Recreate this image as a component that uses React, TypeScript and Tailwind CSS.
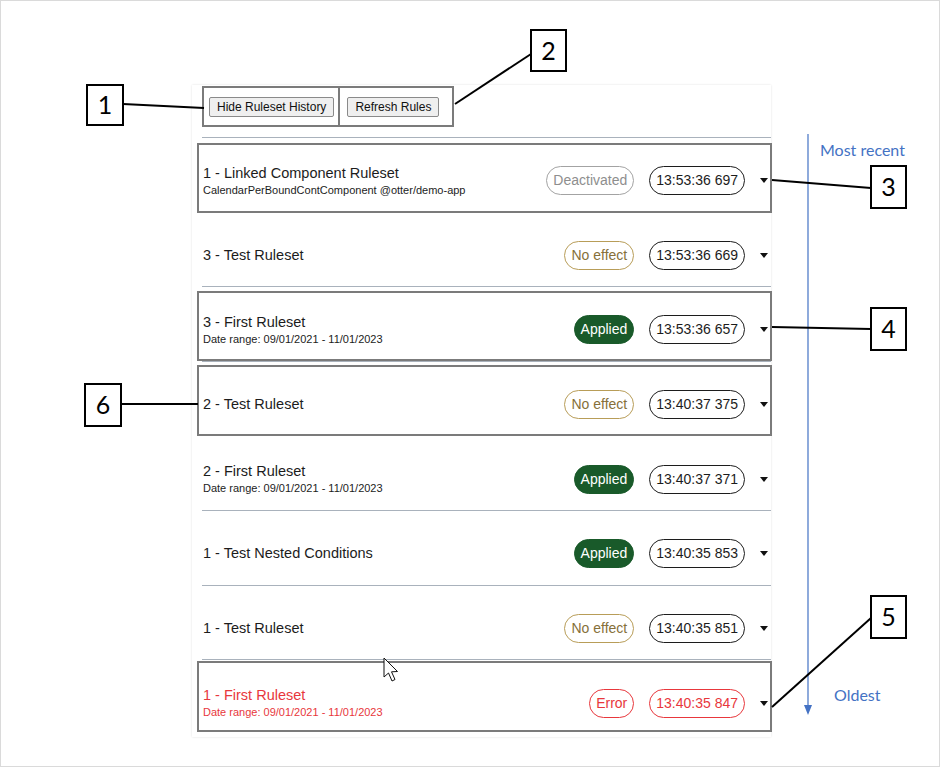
import React from 'react';

type Status = 'deactivated' | 'noeffect' | 'applied' | 'error';

const rows: { title: string; sub?: string; status: Status; time: string; hl?: string }[] = [
  {
    title: '1 - Linked Component Ruleset',
    sub: 'CalendarPerBoundContComponent @otter/demo-app',
    status: 'deactivated',
    time: '13:53:36 697',
    hl: 'top-[5px] -bottom-px',
  },
  { title: '3 - Test Ruleset', status: 'noeffect', time: '13:53:36 669' },
  {
    title: '3 - First Ruleset',
    sub: 'Date range: 09/01/2021 - 11/01/2023',
    status: 'applied',
    time: '13:53:36 657',
    hl: 'top-[4px] bottom-0',
  },
  { title: '2 - Test Ruleset', status: 'noeffect', time: '13:40:37 375', hl: 'top-[3px] -bottom-px' },
  {
    title: '2 - First Ruleset',
    sub: 'Date range: 09/01/2021 - 11/01/2023',
    status: 'applied',
    time: '13:40:37 371',
  },
  { title: '1 - Test Nested Conditions', status: 'applied', time: '13:40:35 853' },
  { title: '1 - Test Ruleset', status: 'noeffect', time: '13:40:35 851' },
  {
    title: '1 - First Ruleset',
    sub: 'Date range: 09/01/2021 - 11/01/2023',
    status: 'error',
    time: '13:40:35 847',
    hl: 'top-[1px] bottom-[3px]',
  },
];

const badge: Record<Status, { label: string; cls: string }> = {
  deactivated: { label: 'Deactivated', cls: 'border-[#a3a3a3] text-[#8e8e8e]' },
  noeffect: { label: 'No effect', cls: 'border-[#b89d58] text-[#86703a]' },
  applied: { label: 'Applied', cls: 'border-[#195a2a] bg-[#195a2a] text-white' },
  error: { label: 'Error', cls: 'border-[#e8373c] text-[#e8373c]' },
};

function Caret() {
  return (
    <svg width="8" height="5" viewBox="0 0 8 5" className="shrink-0">
      <path d="M0 0 L8 0 L4 5 Z" fill="#111" />
    </svg>
  );
}

function Row({ r, last }: { r: (typeof rows)[number]; last: boolean }) {
  const err = r.status === 'error';
  const b = badge[r.status];
  return (
    <div
      className={`relative flex h-[74.6px] items-center justify-between pl-[1px] pr-[3px] pt-[12px] ${
        last ? '' : 'border-b border-[#a9b2bc]'
      }`}
    >
      <div className={`flex flex-col ${err ? 'text-[#e8373c]' : 'text-[#1c1c1c]'}`}>
        <span className="text-[14.5px] leading-[17px]">{r.title}</span>
        {r.sub && <span className="mt-[1px] text-[11px] leading-[14px]">{r.sub}</span>}
      </div>
      <div className="flex items-center gap-[15px]">
        <span className={`flex h-[29px] items-center rounded-full border px-[6px] text-[14px] ${b.cls}`}>
          {b.label}
        </span>
        <span
          className={`flex h-[29px] items-center rounded-full border px-[6px] text-[14px] ${
            err ? 'border-[#e8373c] text-[#e8373c]' : 'border-[#1c1c1c] text-[#1c1c1c]'
          }`}
        >
          {r.time}
        </span>
        <Caret />
      </div>
      {r.hl && (
        <div className={`pointer-events-none absolute -left-[5px] -right-[1px] border-2 border-[#7b7b7b] ${r.hl}`} />
      )}
    </div>
  );
}

function Tag({ n, cls }: { n: string; cls: string }) {
  return (
    <div
      className={`absolute flex items-center justify-center border-2 border-black bg-white text-[25px] text-black ${cls}`}
      style={{ fontFamily: 'Lato, "Open Sans", sans-serif' }}
    >
      {n}
    </div>
  );
}

export default function App() {
  return (
    <div
      className="relative h-[767px] w-[940px] overflow-hidden border border-[#dadada] bg-white"
      style={{ fontFamily: '"Liberation Sans", Arial, sans-serif' }}
    >
      <div className="ml-[191px] mt-[84px] w-[579px] bg-white pb-[2px] shadow-[0_0_2px_rgba(0,0,0,0.12)]">
        <div className="pl-[10px] pt-[1px]">
          <div className="flex h-[41px] w-[252px] border-2 border-[#7b7b7b]">
            <div className="flex items-center border-r-2 border-[#7b7b7b] pl-[5px] pr-[4px]">
              <button className="h-[20px] rounded-[2px] border border-[#8a8a8a] bg-[#efefef] px-[7px] text-[12px] text-[#111]">
                Hide Ruleset History
              </button>
            </div>
            <div className="flex items-center pl-[7px]">
              <button className="h-[20px] rounded-[2px] border border-[#8a8a8a] bg-[#efefef] px-[7px] text-[12px] text-[#111]">
                Refresh Rules
              </button>
            </div>
          </div>
        </div>
        <div className="ml-[10px] mt-[10px] border-t border-[#a9b2bc]">
          {rows.map((r, i) => (
            <Row key={i} r={r} last={i === rows.length - 1} />
          ))}
        </div>
      </div>

      {/* timeline arrow + labels */}
      <div
        className="absolute left-[819px] top-[137px] text-[16px] text-[#4472c4]"
        style={{ fontFamily: 'Lato, "Open Sans", sans-serif' }}
      >
        Most recent
      </div>
      <div
        className="absolute left-[833px] top-[682px] text-[16px] text-[#4472c4]"
        style={{ fontFamily: 'Lato, "Open Sans", sans-serif' }}
      >
        Oldest
      </div>

      <svg className="pointer-events-none absolute inset-0" width="940" height="767">
        <line x1="807" y1="133" x2="807" y2="706" stroke="#4472c4" strokeWidth="1.2" />
        <path d="M803 704 L811 704 L807 714 Z" fill="#4472c4" />
        <g stroke="#000" strokeWidth="2" fill="none">
          <line x1="122" y1="103" x2="203" y2="107" />
          <line x1="454" y1="103" x2="530" y2="53" />
          <line x1="771" y1="179" x2="870" y2="187" />
          <line x1="771" y1="326" x2="870" y2="328" />
          <line x1="771" y1="706" x2="870" y2="617" />
          <line x1="121" y1="403" x2="197" y2="403" />
        </g>
        <path
          d="M383 657 L383 676 L387.5 672 L391 680 L394 678.5 L390.5 670.8 L396.5 670.5 Z"
          fill="#fff"
          stroke="#111"
          strokeWidth="1"
          strokeLinejoin="round"
        />
      </svg>

      <Tag n="1" cls="left-[85px] top-[83px] h-[42px] w-[38px]" />
      <Tag n="2" cls="left-[529px] top-[28px] h-[43px] w-[37px]" />
      <Tag n="3" cls="left-[869px] top-[164px] h-[44px] w-[37px]" />
      <Tag n="4" cls="left-[869px] top-[306px] h-[44px] w-[37px]" />
      <Tag n="5" cls="left-[869px] top-[594px] h-[44px] w-[37px]" />
      <Tag n="6" cls="left-[83px] top-[382px] h-[44px] w-[38px]" />
    </div>
  );
}
